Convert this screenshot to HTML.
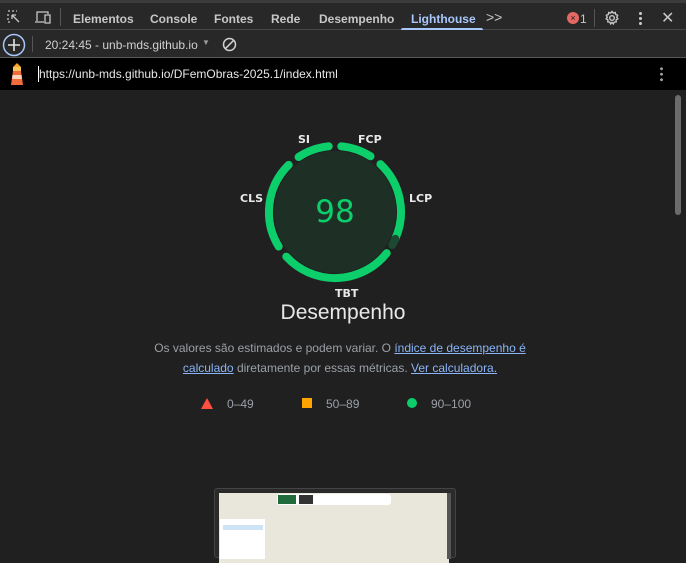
<!DOCTYPE html>
<html><head><meta charset="utf-8"><style>
*{margin:0;padding:0;box-sizing:border-box}
body{width:686px;height:556px;background:#202020;font-family:"Liberation Sans","DejaVu Sans",sans-serif;overflow:hidden;position:relative;color:#e3e3e3}
.tabs{position:absolute;top:0;left:0;width:686px;height:30px;background:#282828;border-top:3px solid #3c3c3c;border-bottom:1px solid #474747}
.tab{position:absolute;top:9px;font-size:12px;font-weight:bold;color:#c7c7c7}
.bar2{position:absolute;top:30px;left:0;width:686px;height:28px;background:#282828;border-bottom:1px solid #5a5a5a}
.url{position:absolute;top:58px;left:0;width:686px;height:32px;background:#000}
.lbl{position:absolute;font-size:11px;font-weight:bold;color:#e8e8e8;font-family:"DejaVu Sans",sans-serif}
a{color:#8ab4f8;text-decoration:underline}
</style></head><body>
<div class="tabs">
<svg style="position:absolute;left:6px;top:6px" width="16" height="16" viewBox="0 0 16 16" fill="none" stroke="#c7c7c7" stroke-width="1.3"><path d="M2 2h2M6 2h2M10 2h1M2 5v2M2 9v2M2 13h2M6 6l7 7M6 6h4M6 6v4"/></svg>
<svg style="position:absolute;left:34px;top:6px" width="18" height="16" viewBox="0 0 18 16" fill="none" stroke="#c7c7c7" stroke-width="1.3"><path d="M3 12V3h11v2M1 13h9M11 6h5v8h-5z"/></svg>
<div style="position:absolute;left:60px;top:5px;width:1px;height:18px;background:#555"></div>
<span class="tab" style="left:73px">Elementos</span>
<span class="tab" style="left:150px">Console</span>
<span class="tab" style="left:214px">Fontes</span>
<span class="tab" style="left:271px">Rede</span>
<span class="tab" style="left:319px">Desempenho</span>
<span class="tab" style="left:411px;color:#a8c7fa">Lighthouse</span>
<div style="position:absolute;left:401px;top:25px;width:82px;height:3px;background:#a8c7fa;border-radius:2px 2px 0 0"></div>
<span class="tab" style="left:486px;top:6px;font-weight:normal;font-size:14px">&gt;&gt;</span>
<div style="position:absolute;left:567px;top:9px;width:12px;height:12px;border-radius:50%;background:#e46962;color:#222;font-size:9px;text-align:center;line-height:12px">×</div>
<span class="tab" style="left:580px;font-weight:normal">1</span>
<div style="position:absolute;left:594px;top:6px;width:1px;height:18px;background:#555"></div>
<svg style="position:absolute;left:604px;top:7px" width="16" height="16" viewBox="0 0 16 16" fill="none" stroke="#c7c7c7" stroke-width="1.4"><circle cx="8" cy="8" r="2.3"/><path d="M8 1.5l1.3 1.6 2-.6.4 2 1.9.8-.8 1.9 1 1.6-1.7 1.1.1 2-2 .2-.9 1.8-1.3-1.5-1.3 1.5-.9-1.8-2-.2.1-2-1.7-1.1 1-1.6-.8-1.9 1.9-.8.4-2 2 .6z"/></svg>
<div style="position:absolute;left:639px;top:8px;width:3px;height:14px;background:radial-gradient(circle,#c7c7c7 1.4px,transparent 1.6px) 0 0/3px 5px"></div>
<span class="tab" style="left:661px;top:5px;font-weight:normal;font-size:16px">✕</span>
</div>
<div class="bar2">
<svg style="position:absolute;left:2px;top:3px" width="24" height="24" viewBox="0 0 24 24"><circle cx="12" cy="12" r="10.5" fill="none" stroke="#a8c7fa" stroke-width="1.5"/><path d="M12 6v12M6 12h12" stroke="#e3e3e3" stroke-width="1.6"/></svg>
<div style="position:absolute;left:32px;top:6px;width:1px;height:16px;background:#555"></div>
<span style="position:absolute;left:45px;top:8px;font-size:12px;color:#d0d0d0">20:24:45 - unb-mds.github.io</span>
<span style="position:absolute;left:202px;top:8px;font-size:8px;color:#999">▼</span>
<svg style="position:absolute;left:222px;top:7px" width="15" height="15" viewBox="0 0 15 15" fill="none" stroke="#d0d0d0" stroke-width="1.5"><circle cx="7.5" cy="7.5" r="6"/><path d="M3.3 11.7L11.7 3.3"/></svg>
</div>
<div class="url">
<svg style="position:absolute;left:9px;top:5px" width="16" height="22" viewBox="0 0 16 22"><path d="M8 0l4 4H4z" fill="#f5a623"/><rect x="4" y="4" width="8" height="4" fill="#f8c45c"/><path d="M4 8h8l2 14H2z" fill="#f26b3a"/><path d="M3.5 12h9l.5 4h-10z" fill="#fbd3bd"/></svg>
<div style="position:absolute;left:38px;top:8px;width:1px;height:16px;background:#fff"></div>
<span style="position:absolute;left:39px;top:9px;font-size:12px;color:#e8e8e8">https://unb-mds.github.io/DFemObras-2025.1/index.html</span>
<div style="position:absolute;left:660px;top:8px;width:3px;height:16px;background:radial-gradient(circle,#999 1.4px,transparent 1.6px) 0 0/3px 5.5px"></div>
</div>
<div style="position:absolute;left:675px;top:95px;width:6px;height:120px;background:#6b6b6b;border-radius:3px"></div>
<svg style="position:absolute;left:0;top:0" width="686" height="556">
<circle cx="335" cy="212" r="61" fill="#1e3026"/>
<g fill="none" stroke="#0cce6b" stroke-width="8" stroke-linecap="round">
<path d="M341.3 146.3 A66 66 0 0 1 370.5 156.3"/>
<path d="M380.4 164.1 A66 66 0 0 1 395.3 238.8"/>
<path d="M386.7 253.1 A66 66 0 0 1 286.3 256.6"/>
<path d="M278.7 246.5 A66 66 0 0 1 288.7 164.9"/>
<path d="M298.6 157 A66 66 0 0 1 328.7 146.3"/>
</g>
<path d="M395.3 238.8 A66 66 0 0 1 392.2 245" fill="none" stroke="#1c4a31" stroke-width="8" stroke-linecap="round"/>
</svg>
<div style="position:absolute;left:285px;top:194px;width:100px;text-align:center;font-size:31px;color:#0cce6b;font-family:'DejaVu Sans',sans-serif">98</div>
<span class="lbl" style="left:298px;top:133px">SI</span>
<span class="lbl" style="left:358px;top:133px">FCP</span>
<span class="lbl" style="left:240px;top:192px">CLS</span>
<span class="lbl" style="left:409px;top:192px">LCP</span>
<span class="lbl" style="left:335px;top:287px">TBT</span>
<div style="position:absolute;left:0;width:686px;top:301px;text-align:center;font-size:21px;color:#e8e8e8">Desempenho</div>
<div style="position:absolute;left:140px;width:400px;top:338px;text-align:center;font-size:12px;line-height:20px;color:#9aa0a6">Os valores são estimados e podem variar. O <a>índice de desempenho é calculado</a> diretamente por essas métricas. <a>Ver calculadora.</a></div>
<svg style="position:absolute;left:201px;top:398px" width="12" height="11"><path d="M6 0L12 11H0z" fill="#ff4e42"/></svg>
<span style="position:absolute;left:227px;top:397px;font-size:12px;color:#9aa0a6">0–49</span>
<div style="position:absolute;left:302px;top:398px;width:10px;height:10px;background:#ffa400"></div>
<span style="position:absolute;left:326px;top:397px;font-size:12px;color:#9aa0a6">50–89</span>
<div style="position:absolute;left:407px;top:398px;width:10px;height:10px;border-radius:50%;background:#0cce6b"></div>
<span style="position:absolute;left:431px;top:397px;font-size:12px;color:#9aa0a6">90–100</span>
<div style="position:absolute;left:214px;top:488px;width:242px;height:70px;background:#2a2a2a;border:1px solid #444;border-radius:3px">
<div style="position:absolute;left:4px;top:4px;width:230px;height:70px;background:#e9e6dc"></div>
<div style="position:absolute;left:5px;top:30px;width:45px;height:40px;background:#fff"></div>
<div style="position:absolute;left:8px;top:36px;width:40px;height:5px;background:#cfe3f7"></div>
<div style="position:absolute;left:62px;top:5px;width:114px;height:11px;background:#fff;border-radius:3px"></div>
<div style="position:absolute;left:63px;top:6px;width:18px;height:9px;background:#1f6b3c"></div>
<div style="position:absolute;left:84px;top:6px;width:14px;height:9px;background:#333"></div>
<div style="position:absolute;left:232px;top:4px;width:4px;height:66px;background:#555"></div>
</div>
</body></html>
